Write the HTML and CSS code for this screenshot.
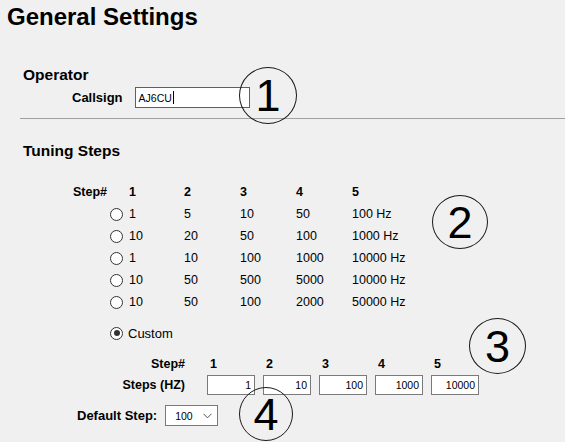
FILE: index.html
```html
<!DOCTYPE html>
<html lang="en">
<head>
<meta charset="utf-8">
<title>General Settings</title>
<link rel="stylesheet" href="styles.css">
</head>
<body>
<h1 class="title">General Settings</h1>

<section class="operator">
  <h2 class="heading">Operator</h2>
  <div class="callsign-row">
    <span class="label">Callsign</span>
    <div class="field field-focus">AJ6CU<span class="caret"></span></div>
  </div>
</section>

<hr class="divider">

<section class="tuning">
  <h2 class="heading">Tuning Steps</h2>
  <div class="steps-grid">
    <span class="hdr lbl">Step#</span><span></span>
    <span class="hdr">1</span><span class="hdr">2</span><span class="hdr">3</span><span class="hdr">4</span><span class="hdr">5</span>

    <span></span><span class="radio"></span>
    <span>1</span><span>5</span><span>10</span><span>50</span><span>100 Hz</span>

    <span></span><span class="radio"></span>
    <span>10</span><span>20</span><span>50</span><span>100</span><span>1000 Hz</span>

    <span></span><span class="radio"></span>
    <span>1</span><span>10</span><span>100</span><span>1000</span><span>10000 Hz</span>

    <span></span><span class="radio"></span>
    <span>10</span><span>50</span><span>500</span><span>5000</span><span>10000 Hz</span>

    <span></span><span class="radio"></span>
    <span>10</span><span>50</span><span>100</span><span>2000</span><span>50000 Hz</span>
  </div>

  <div class="custom-row">
    <span class="radio radio-on"></span>
    <span class="custom-text">Custom</span>
  </div>

  <div class="custom-grid">
    <span class="hdr lbl lbl-top">Step#</span>
    <span class="hdr ch">1</span><span class="hdr ch">2</span><span class="hdr ch">3</span><span class="hdr ch">4</span><span class="hdr ch">5</span>
    <span class="hdr lbl">Steps (HZ)</span>
    <div class="field num">1</div>
    <div class="field num">10</div>
    <div class="field num">100</div>
    <div class="field num">1000</div>
    <div class="field num">10000</div>
  </div>

  <div class="default-row">
    <span class="label">Default Step:</span>
    <div class="select">
      <span>100</span>
      <svg class="chev" width="9" height="6" viewBox="0 0 9 6"><path d="M0.5 0.8 L4.5 4.8 L8.5 0.8" fill="none" stroke="#555" stroke-width="1"/></svg>
    </div>
  </div>
</section>

<div class="marker m1">1</div>
<div class="marker m2">2</div>
<div class="marker m3">3</div>
<div class="marker m4">4</div>
</body>
</html>
```

FILE: styles.css
```css
html, body {
  margin: 0;
  padding: 0;
}
body {
  background: #f0f0f0;
  font-family: "Liberation Sans", Arial, sans-serif;
  color: #000;
  position: relative;
  width: 565px;
  height: 442px;
  overflow: hidden;
}
.title {
  margin: 0;
  padding: 3px 0 0 7px;
  font-size: 24px;
  line-height: 28px;
  font-weight: bold;
}
.heading {
  margin: 0;
  font-size: 15.5px;
  line-height: 18px;
  font-weight: bold;
}
.operator {
  padding-left: 23px;
  margin-top: 35px;
}
.callsign-row {
  display: flex;
  align-items: center;
  margin-top: 3px;
  padding-left: 49px;
  gap: 12px;
}
.label {
  font-size: 13px;
  font-weight: bold;
}
.field {
  box-sizing: border-box;
  background: #fff;
  border: 1px solid #7a7a7a;
  font-size: 10.5px;
  display: flex;
  align-items: center;
}
.field-focus {
  width: 115px;
  height: 21px;
  border-color: #0078d7;
  padding-left: 3px;
}
.caret {
  display: inline-block;
  width: 1px;
  height: 13px;
  background: #000;
  margin-left: 1px;
}
.divider {
  margin: 10px 0 0 20px;
  border: 0;
  height: 1px;
  background: #a0a0a0;
}
.tuning {
  margin-top: 23px;
}
.tuning > .heading {
  padding-left: 23px;
}
.steps-grid {
  display: grid;
  grid-template-columns: 107px 22px 55px 56px 56px 56px auto;
  grid-auto-rows: 22px;
  align-items: center;
  margin-top: 21px;
  font-size: 12.5px;
}
.hdr {
  font-weight: bold;
  font-size: 12.5px;
}
.lbl {
  text-align: right;
}
.radio {
  box-sizing: border-box;
  width: 13px;
  height: 13px;
  border: 1px solid #333;
  border-radius: 50%;
  background: #fff;
  margin-left: 3px;
  position: relative;
}
.radio-on::after {
  content: "";
  position: absolute;
  left: 2.5px;
  top: 2.5px;
  width: 6px;
  height: 6px;
  border-radius: 50%;
  background: #333;
}
.custom-row {
  display: flex;
  align-items: center;
  height: 22px;
  margin-top: 9px;
  padding-left: 107px;
  gap: 5px;
}
.custom-text {
  font-size: 13px;
}
.custom-grid {
  display: grid;
  grid-template-columns: 199px repeat(5, 48px);
  column-gap: 8px;
  margin-top: 12px;
  align-items: center;
}
.custom-grid .lbl {
  padding-right: 14px;
}
.custom-grid .ch,
.custom-grid .lbl-top {
  height: 16px;
  line-height: 16px;
  margin-bottom: 3px;
}
.custom-grid .ch {
  padding-left: 3px;
}
.num {
  height: 20px;
  justify-content: flex-end;
  padding-right: 3px;
}
.default-row {
  display: flex;
  align-items: center;
  margin-top: 10px;
  padding-left: 77px;
  gap: 8px;
}
.select {
  box-sizing: border-box;
  width: 53px;
  height: 21px;
  background: #fff;
  border: 1px solid #7a7a7a;
  display: flex;
  align-items: center;
  justify-content: space-between;
  padding: 0 5px 0 9px;
  font-size: 10.5px;
}
.marker {
  position: absolute;
  box-sizing: border-box;
  border: 1px solid #1a1a1a;
  border-radius: 50%;
  display: flex;
  align-items: center;
  justify-content: center;
  font-family: "Liberation Sans", Arial, sans-serif;
  font-size: 45px;
  line-height: 1;
  color: #000;
}
.m1 { left: 239px; top: 67px; width: 58px; height: 57px; }
.m2 { left: 432px; top: 195px; width: 56px; height: 54px; }
.m3 { left: 469px; top: 318px; width: 57px; height: 56px; }
.m4 { left: 239px; top: 387px; width: 54px; height: 54px; }
```
